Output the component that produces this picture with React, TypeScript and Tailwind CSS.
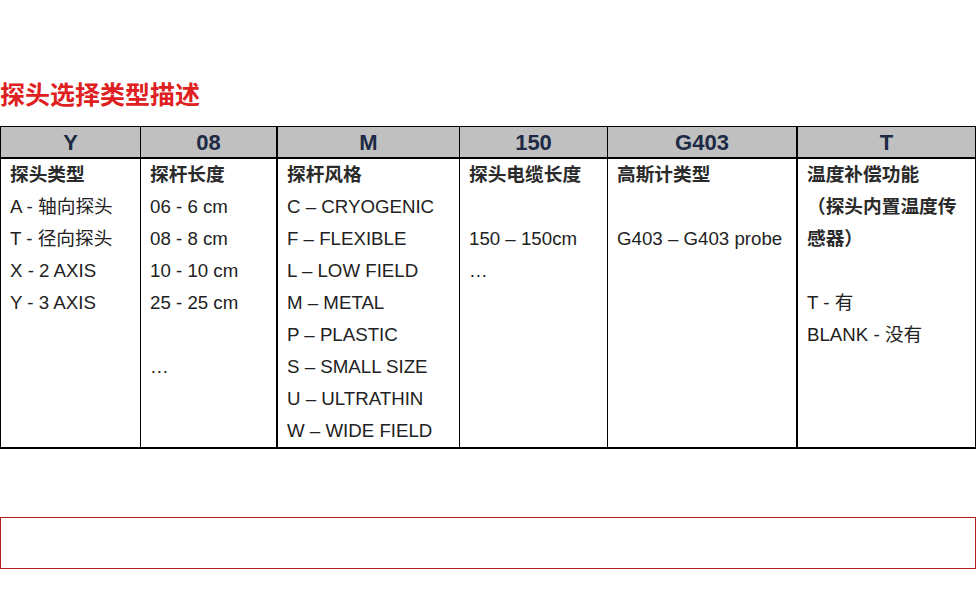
import React from "react";

const font = { fontFamily: '"Liberation Sans", Arial, "Noto Sans CJK SC", sans-serif' };

type Col = {
  head: string;
  width: string;
  border: string;
  lines: { text: string; bold?: boolean }[];
};

const cols: Col[] = [
  {
    head: "Y",
    width: "w-[139px]",
    border: "",
    lines: [
      { text: "探头类型", bold: true },
      { text: "A - 轴向探头" },
      { text: "T - 径向探头" },
      { text: "X - 2 AXIS" },
      { text: "Y - 3 AXIS" },
    ],
  },
  {
    head: "08",
    width: "w-[136px]",
    border: "border-l border-black",
    lines: [
      { text: "探杆长度", bold: true },
      { text: "06 - 6 cm" },
      { text: "08 - 8 cm" },
      { text: "10 - 10 cm" },
      { text: "25 - 25 cm" },
      { text: "" },
      { text: "…" },
    ],
  },
  {
    head: "M",
    width: "w-[183px]",
    border: "border-l-2 border-black",
    lines: [
      { text: "探杆风格", bold: true },
      { text: "C – CRYOGENIC" },
      { text: "F – FLEXIBLE" },
      { text: "L – LOW FIELD" },
      { text: "M – METAL" },
      { text: "P – PLASTIC" },
      { text: "S – SMALL SIZE" },
      { text: "U – ULTRATHIN" },
      { text: "W – WIDE FIELD" },
    ],
  },
  {
    head: "150",
    width: "w-[148px]",
    border: "border-l border-black",
    lines: [
      { text: "探头电缆长度", bold: true },
      { text: "" },
      { text: "150 – 150cm" },
      { text: "…" },
    ],
  },
  {
    head: "G403",
    width: "w-[189px]",
    border: "border-l border-black",
    lines: [
      { text: "高斯计类型", bold: true },
      { text: "" },
      { text: "G403 – G403 probe" },
    ],
  },
  {
    head: "T",
    width: "flex-1",
    border: "border-l-2 border-black",
    lines: [
      { text: "温度补偿功能", bold: true },
      { text: "（探头内置温度传", bold: true },
      { text: "感器）", bold: true },
      { text: "" },
      { text: "T - 有" },
      { text: "BLANK - 没有" },
    ],
  },
];

export default function App() {
  return (
    <div className="w-[976px] h-[600px] bg-white overflow-hidden" style={font}>
      {/* Title */}
      <div className="pt-[80px] h-[110px] text-[25px] leading-[30px] font-bold text-[#e02020]">
        探头选择类型描述
      </div>

      {/* Table */}
      <div className="mt-[16px] w-[976px] flex border border-black border-b-2">
        {cols.map((c) => (
          <div key={c.head} className={`${c.width} ${c.border} flex flex-col`}>
            <div className="h-[32px] bg-[#c0c0c0] border-b-2 border-black flex items-center justify-center text-[22px] font-bold text-[#1c2a45]">
              {c.head}
            </div>
            <div className="h-[288px] pl-[9px] pr-[6px] text-[18.7px] leading-[32px] text-[#222] whitespace-nowrap">
              {c.lines.map((l, i) => (
                <div key={i} className={`h-[32px] ${l.bold ? "font-bold text-[#2a2a2a]" : ""}`}>
                  {l.text}
                </div>
              ))}
            </div>
          </div>
        ))}
      </div>

      {/* Bottom red box */}
      <div className="mt-[68px] w-[976px] h-[52px] border border-[#b02020]" />
    </div>
  );
}
